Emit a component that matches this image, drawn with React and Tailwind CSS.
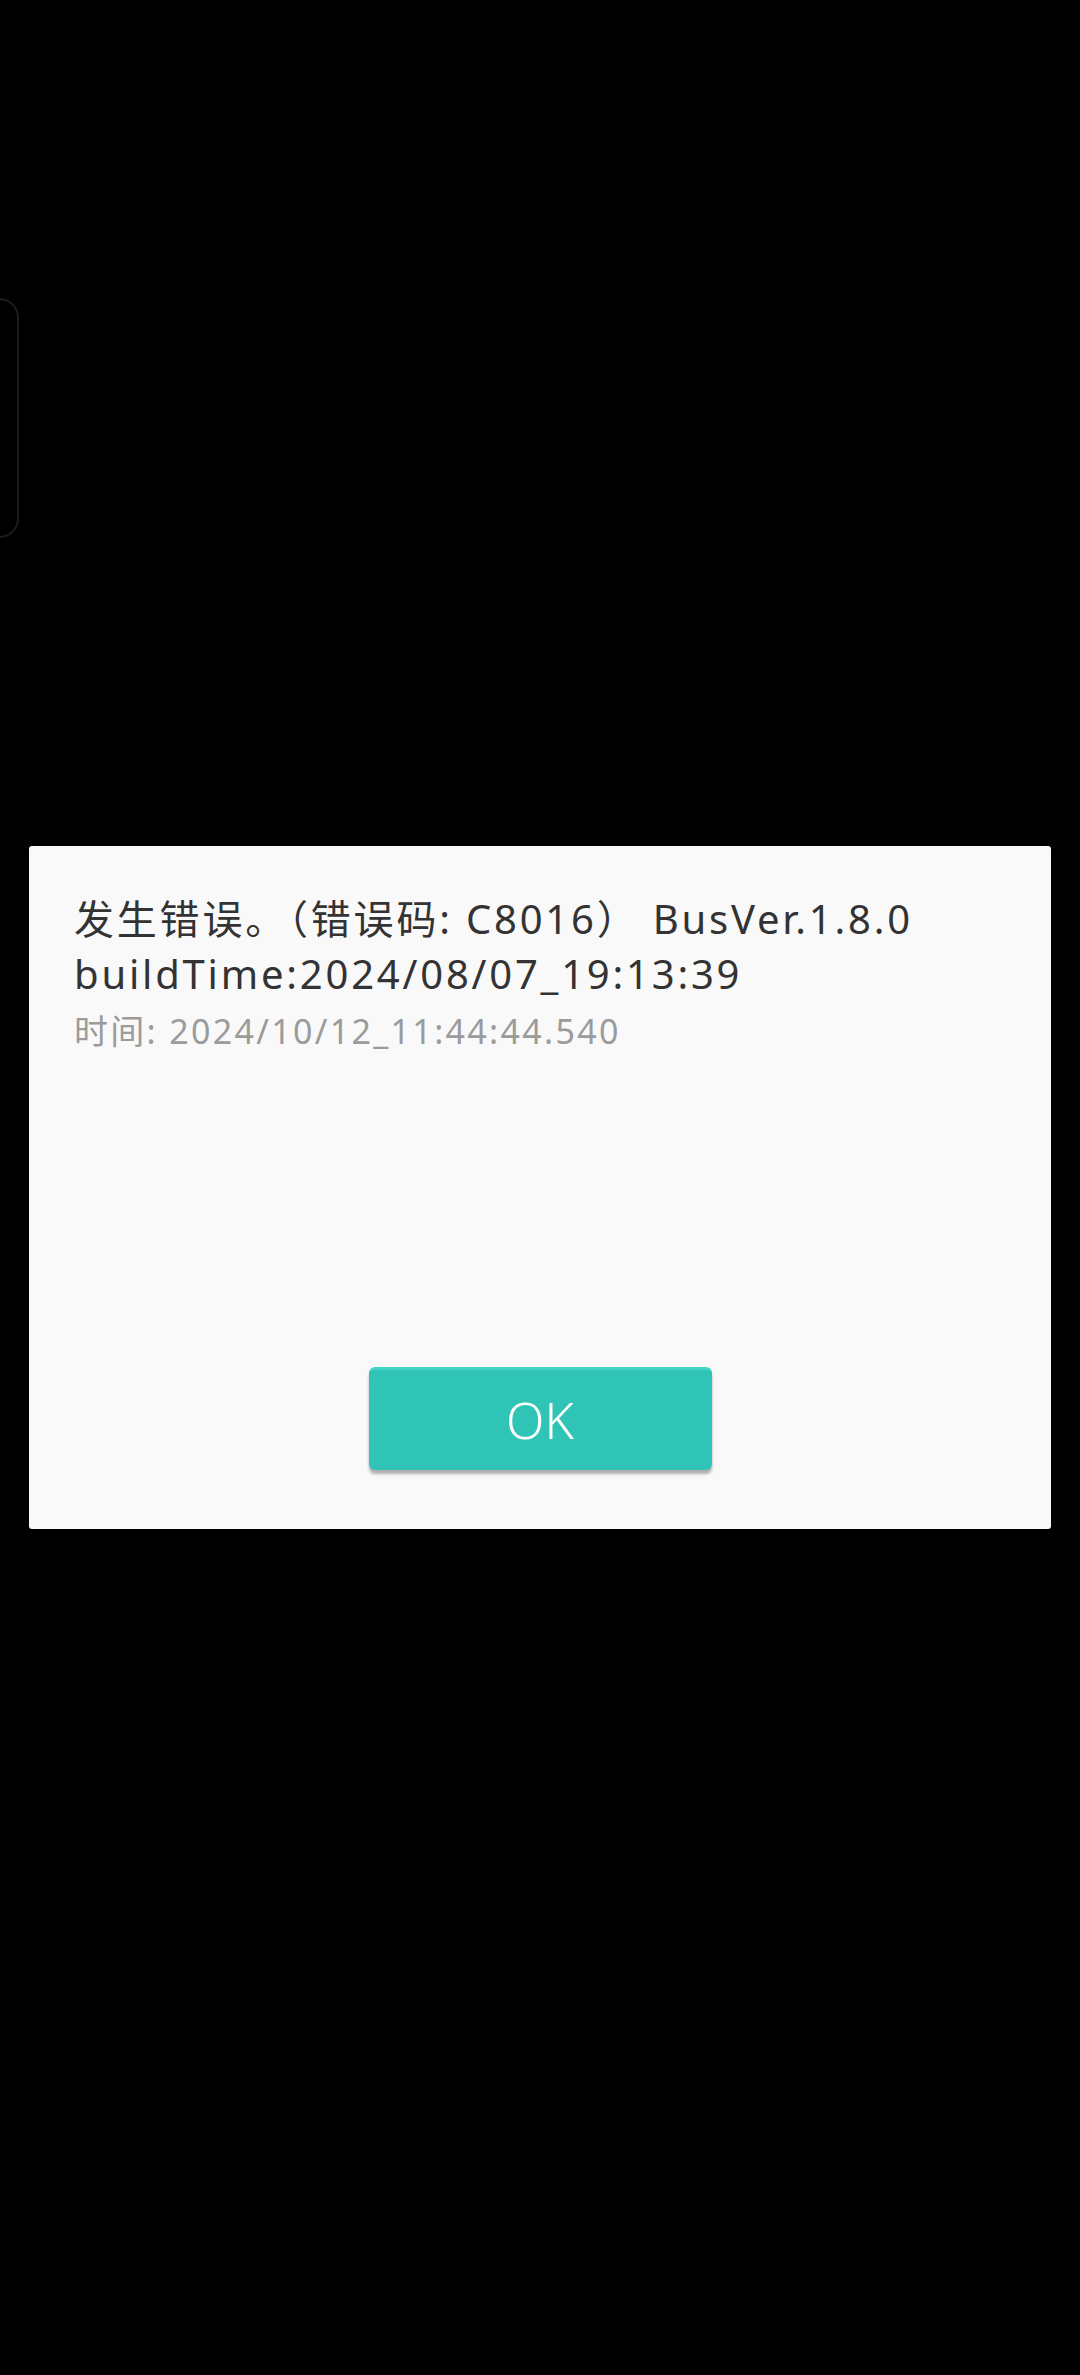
export default function App() {
  return (
    <div className="relative min-h-[2375px] w-full overflow-hidden bg-black font-['Noto_Sans','Noto_Sans_CJK_SC',sans-serif]">
      {/* faint edge handle on the left */}
      <div className="absolute left-[-20px] top-[298px] h-[240px] w-[39px] rounded-[20px] border-2 border-[#1c1c1c]" />

      <div className="pt-[846px] px-[29px]">
        <div className="flex h-[683px] flex-col rounded-[3px] bg-[#faf9f9] px-[45px] pt-[45px] pb-[59px]">
          <div className="flex flex-col">
            <p className="text-[40px] leading-[55px] tracking-[0.07em] text-[#333333]">
              发生错误。（错误码: C8016） BusVer.1.8.0 buildTime:2024/08/07_19:13:39
            </p>
            <p className="mt-[3px] text-[34px] leading-[55px] tracking-[0.068em] text-[#9b9b9b]">
              时间: 2024/10/12_11:44:44.540
            </p>
          </div>
          <div className="mt-auto flex justify-center">
            <button className="flex h-[103px] w-[343px] items-center justify-center rounded-[6px] border-t-[3px] border-[#42d2c6] bg-[#30c4b7] text-[50px] font-light text-white shadow-[0_4px_3px_rgba(0,0,0,0.3)]">
              OK
            </button>
          </div>
        </div>
      </div>
    </div>
  );
}
